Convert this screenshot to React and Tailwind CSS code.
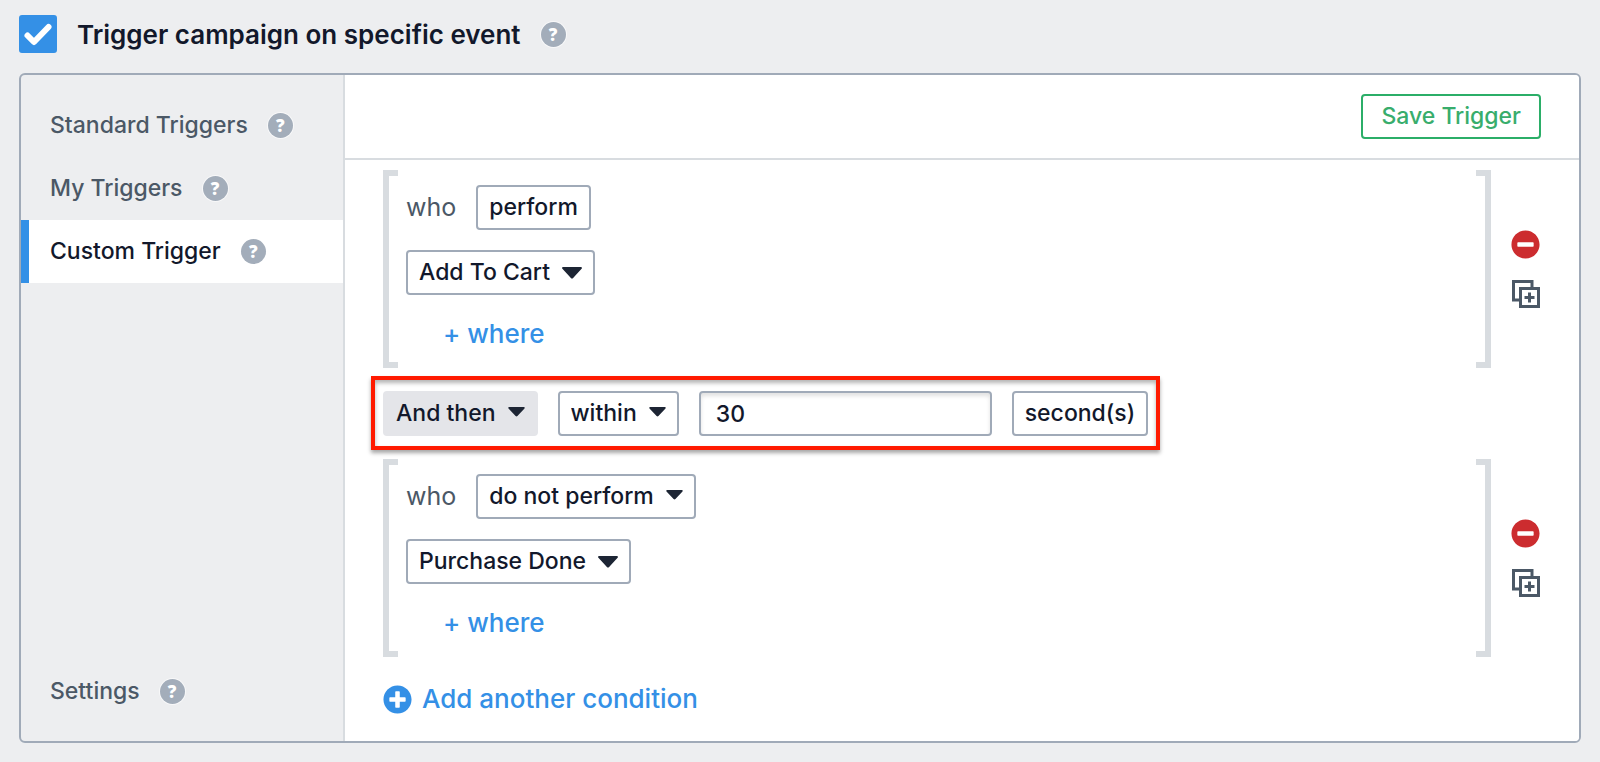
import React, { useState } from 'react';
import { FaMinusCircle, FaPlusCircle } from 'react-icons/fa';

const control = 'h-[45px] rounded-[4px] border-2 text-[23px] font-medium text-[#12182b]';
const outlined = 'border-[#a0aab8] bg-white';

const Help = ({ label }) => (
  <button
    type="button"
    aria-label={`Help: ${label}`}
    className="flex h-[25px] w-[25px] items-center justify-center rounded-full bg-[#a3adba] font-['Open_Sans',sans-serif] text-[17px] leading-[25px] font-extrabold text-white ring-1 ring-white/60"
  >
    ?
  </button>
);

const Caret = ({ large }) => (
  <svg
    viewBox="0 0 20 12"
    className={`pointer-events-none absolute right-[13px] ${large ? 'top-[17px] h-3 w-5' : 'top-4 h-[10px] w-[17px]'}`}
    fill="#1d2534"
    aria-hidden="true"
  >
    <path d="M1.2 0h17.6c1 0 1.5 1.1.8 1.8l-8.5 9.1c-.6.7-1.6.7-2.2 0L.4 1.8C-.3 1.1.2 0 1.2 0z" />
  </svg>
);

const Dropdown = ({ label, options, filled, large }) => (
  <div className="relative">
    <select
      aria-label={label}
      className={`${control} appearance-none field-sizing-content pl-[11px] ${large ? 'pr-[43px]' : 'pr-[40px]'} ${
        filled ? 'border-[#e4e5e9] bg-[#e4e5e9]' : outlined
      }`}
    >
      {options.map((option) => (
        <option key={option}>{option}</option>
      ))}
    </select>
    <Caret large={large} />
  </div>
);

const DuplicateIcon = () => (
  <svg viewBox="0 0 28 28" className="h-7 w-7" fill="none" stroke="#4b5866" strokeWidth="3" aria-hidden="true">
    <path d="M20 7V1.5H1.5V20H7" />
    <path d="M8.5 8.5h18v18h-18z" />
    <path d="M17.5 12.5v10M12.5 17.5h10" />
  </svg>
);

const SidebarItem = ({ label, active, onClick }) => (
  <div
    className={`flex h-[63px] items-center gap-5 border-l-8 pl-[21px] ${
      active ? 'border-[#3490e6] bg-white' : 'border-transparent'
    }`}
  >
    <button
      type="button"
      onClick={onClick}
      className={`text-[23px] font-medium ${active ? 'text-[#12182b]' : 'text-[#4b5866]'}`}
    >
      {label}
    </button>
    <Help label={label} />
  </div>
);

const Condition = ({ verb, event }) => (
  <div className="flex h-[198px] items-stretch">
    <div className="w-[15px] border-6 border-r-0 border-[#d8dce0]" />
    <div className="flex flex-1 flex-col items-start pt-[15px] pl-2">
      <div className="flex items-center gap-5">
        <span className="text-[25px] text-[#4b5866]">who</span>
        {verb}
      </div>
      <div className="mt-5">{event}</div>
      <button type="button" className="mt-5 ml-[37px] text-[26px] leading-[38px] font-medium text-[#3490e6]">
        + where
      </button>
    </div>
    <div className="w-[15px] border-6 border-l-0 border-[#d8dce0]" />
    <div className="ml-5 flex flex-col items-center justify-center gap-[21px]">
      <button type="button" aria-label="Remove condition" className="text-[#cc2c2f]">
        <FaMinusCircle size={29} />
      </button>
      <button type="button" aria-label="Duplicate condition">
        <DuplicateIcon />
      </button>
    </div>
  </div>
);

const App = () => {
  const [enabled, setEnabled] = useState(true);
  const [tab, setTab] = useState('Custom Trigger');

  return (
    <div className="flex min-h-screen flex-col bg-[#edeef0] px-[19px] pt-[15px] pb-[19px] font-['Inter','Liberation_Sans',sans-serif]">
      <div className="flex h-[38px] items-center gap-5">
        <div className="relative h-[38px] w-[38px]">
          <input
            id="trigger-enabled"
            type="checkbox"
            checked={enabled}
            onChange={() => setEnabled(!enabled)}
            className="block h-[38px] w-[38px] appearance-none rounded-[3px] border-2 border-[#3490e6] bg-white checked:bg-[#3490e6]"
          />
          {enabled && (
            <svg
              viewBox="0 0 38 38"
              className="pointer-events-none absolute inset-0"
              fill="none"
              stroke="#fff"
              strokeWidth="6"
              strokeLinecap="round"
              strokeLinejoin="round"
              aria-hidden="true"
            >
              <path d="M8.5 20.5l6.5 6.5L29.5 12" />
            </svg>
          )}
        </div>
        <label htmlFor="trigger-enabled" className="text-[26px] font-semibold text-[#12182b]">
          Trigger campaign on specific event
        </label>
        <Help label="Trigger campaign" />
      </div>

      <div className="mt-5 flex flex-1 overflow-hidden rounded-[6px] border-2 border-[#a0aab8]">
        {/* Left: trigger types */}
        <nav className="flex w-[324px] shrink-0 flex-col border-r-2 border-[#d8dce0] pt-[19px] pb-[18px]">
          {['Standard Triggers', 'My Triggers', 'Custom Trigger'].map((label) => (
            <SidebarItem key={label} label={label} active={tab === label} onClick={() => setTab(label)} />
          ))}
          <div className="mt-auto">
            <SidebarItem label="Settings" active={tab === 'Settings'} onClick={() => setTab('Settings')} />
          </div>
        </nav>

        {/* Right: trigger builder */}
        <main className="flex-1 bg-white">
          <div className="flex justify-end border-b-2 border-[#d8dce0] pt-[19px] pr-[38px] pb-[19px]">
            <button
              type="button"
              className="h-[45px] rounded-[4px] border-2 border-[#2bae68] px-[18px] text-[23px] font-medium text-[#38ad6c]"
            >
              Save Trigger
            </button>
          </div>

          <div className="pt-[10px] pr-[39px] pb-[27px] pl-[38px]">
            <Condition
              verb={<button type="button" className={`${control} ${outlined} px-[11px]`}>perform</button>}
              event={<Dropdown label="Event" options={['Add To Cart']} large />}
            />

            <div className="mt-2 mb-[9px] -ml-3 flex w-fit gap-5 border-4 border-[#ff1a00] px-2 pt-[11px] pb-[10px] shadow-[0_3px_4px_rgba(0,0,0,0.35),inset_0_3px_4px_rgba(0,0,0,0.3)]">
              <Dropdown label="Operator" options={['And then']} filled />
              <Dropdown label="Timing" options={['within']} />
              <input
                type="text"
                aria-label="Duration"
                defaultValue="30"
                className={`${control} ${outlined} w-[293px] px-[15px] shadow-[inset_0_3px_4px_rgba(0,0,0,0.12)]`}
              />
              <button type="button" className={`${control} ${outlined} px-[11px]`}>second(s)</button>
            </div>

            <Condition
              verb={<Dropdown label="Verb" options={['do not perform']} />}
              event={<Dropdown label="Event" options={['Purchase Done']} large />}
            />

            <button type="button" className="mt-[27px] flex items-center gap-[10px] text-[26px] leading-[30px] font-medium text-[#3490e6]">
              <FaPlusCircle size={29} />
              Add another condition
            </button>
          </div>
        </main>
      </div>
    </div>
  );
};

export default App;
